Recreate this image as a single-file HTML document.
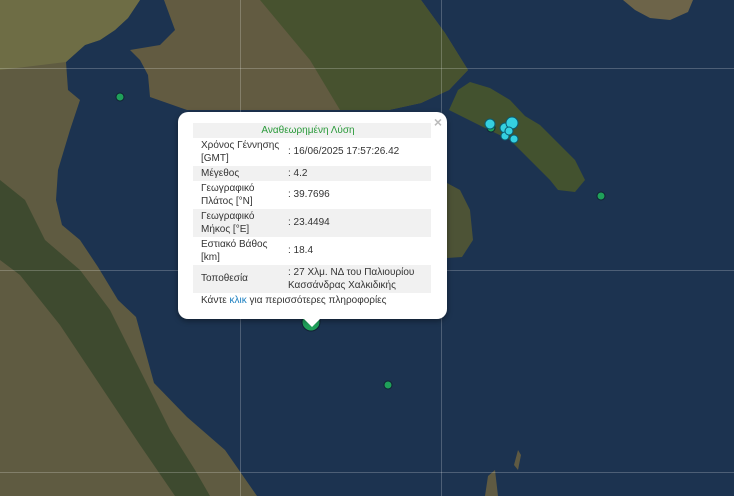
<!DOCTYPE html>
<html><head><meta charset="utf-8"><style>
html,body{margin:0;padding:0;width:734px;height:496px;overflow:hidden;background:#1c3350;font-family:"Liberation Sans","Noto Sans CJK SC",sans-serif}
#map{position:absolute;left:0;top:0}
.pop{position:absolute;left:178px;top:112px;width:269px;height:207px;background:#fff;border-radius:10px;box-shadow:0 2px 6px rgba(0,0,0,.4)}
.x{position:absolute;right:5px;top:2px;color:#bbb;font-size:14px;font-weight:bold}
table{position:absolute;left:15px;top:11px;width:238px;border-collapse:collapse;font-size:10px;color:#333;line-height:13.5px}
td{padding:0 8px;vertical-align:middle}
td:first-child{width:79px}
td:last-child{padding-left:0}
tr{height:15px}
tr.d{height:28px}
tr.g{background:#f1f1f1}
.t{text-align:center;color:#2a9a3a}
.m{position:absolute;left:23px;top:183px;font-size:10px;color:#333}
.m span{color:#1b7fc0}
</style></head><body>
<svg id="map" width="734" height="496" viewBox="0 0 734 496">
<rect width="734" height="496" fill="#1c3350"/>
<path d="M0,0 L140,0 L128,18 L115,30 L100,40 L85,45 L66,62 L68,90 L80,100 L70,130 L58,170 L56,200 L62,225 L80,240 L98,267 L118,300 L136,317 L154,383 L187,417 L225,450 L257,496 L0,496Z" fill="#5f5b41"/>
<path d="M0,0 L140,0 L128,18 L115,30 L100,40 L85,45 L66,62 L0,70Z" fill="#6e6d45"/>
<path d="M0,180 L25,200 L45,240 L80,270 L110,310 L140,370 L170,430 L195,470 L210,496 L175,496 L140,445 L100,385 L60,325 L20,275 L0,260Z" fill="#3e4a2f"/>
<path d="M164,0 L421,0 L445,33 L468,70 L449,90 L421,103 L389,110 L187,110 L150,97 L148,75 L140,60 L130,50 L160,45 L175,30Z" fill="#625b41"/>
<path d="M260,0 L421,0 L445,33 L468,70 L449,90 L421,103 L389,110 L340,110 L310,60Z" fill="#47522f"/>
<path d="M458,90 L470,82 L490,88 L510,100 L525,116 L540,125 L555,140 L575,160 L585,180 L575,192 L558,190 L550,180 L530,160 L510,140 L485,128 L465,118 L449,110Z" fill="#43522f"/>
<path d="M447,183 L460,190 L470,210 L473,240 L462,257 L447,258Z" fill="#4d5336"/>
<path d="M623,0 L693,0 L688,12 L670,20 L650,18 L635,10Z" fill="#6d6449"/>
<path d="M485,496 L488,476 L495,470 L498,496Z" fill="#5f5a42"/>
<path d="M514,465 L518,450 L521,455 L518,470Z" fill="#5f5a42"/>
<g stroke="#fff" stroke-opacity=".22" stroke-width="1">
<line x1="0" y1="68.5" x2="734" y2="68.5"/><line x1="0" y1="270.5" x2="734" y2="270.5"/><line x1="0" y1="472.5" x2="734" y2="472.5"/>
<line x1="240.5" y1="0" x2="240.5" y2="496"/><line x1="441.5" y1="0" x2="441.5" y2="496"/>
</g>
<g stroke="#123" stroke-width="1" fill="#1fa05a">
<circle cx="120" cy="97" r="4"/><circle cx="601" cy="196" r="4"/><circle cx="388" cy="385" r="4"/>
<circle cx="311" cy="322" r="9"/>
<circle cx="491" cy="128" r="4"/>
</g>
<g stroke="#0a5a70" stroke-width="1" fill="#35d0e0">
<circle cx="490" cy="124" r="5"/><circle cx="505" cy="128" r="5"/><circle cx="512" cy="123" r="6"/><circle cx="505" cy="136" r="4"/><circle cx="514" cy="139" r="4"/><circle cx="509" cy="131" r="4"/>
</g>
</svg>
<div class="pop"><div class="x">×</div>
<table>
<tr class="g"><td colspan="2" class="t">Αναθεωρημένη Λύση</td></tr>
<tr class="d"><td>Χρόνος Γέννησης [GMT]</td><td>: 16/06/2025 17:57:26.42</td></tr>
<tr class="g"><td>Μέγεθος</td><td>: 4.2</td></tr>
<tr class="d"><td>Γεωγραφικό Πλάτος [°N]</td><td>: 39.7696</td></tr>
<tr class="g d"><td>Γεωγραφικό Μήκος [°E]</td><td>: 23.4494</td></tr>
<tr class="d"><td>Εστιακό Βάθος [km]</td><td>: 18.4</td></tr>
<tr class="g d"><td>Τοποθεσία</td><td>: 27 Χλμ. ΝΔ του Παλιουρίου Κασσάνδρας Χαλκιδικής</td></tr>
</table>
<div class="m">Κάντε <span>κλικ</span> για περισσότερες πληροφορίες</div>
</div>
<svg style="position:absolute;left:303px;top:318px" width="18" height="9"><path d="M0,0 L9,9 L18,0Z" fill="#fff"/></svg>
</body></html>
